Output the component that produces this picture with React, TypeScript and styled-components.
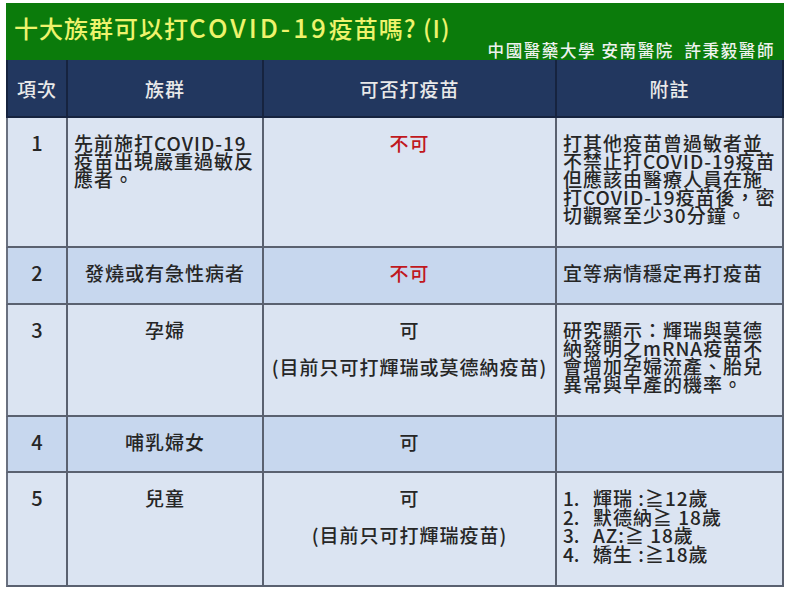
import React from 'react';
import styled, { createGlobalStyle, css } from 'styled-components';

const GlobalStyle = createGlobalStyle`
  html, body { margin: 0; padding: 0; background: #ffffff; }
  body { font-family: "Noto Sans CJK TC", "Noto Sans", sans-serif; }
`;

const Page = styled.div`
  width: 792px;
  height: 595px;
  box-sizing: border-box;
  padding: 3px 8px 0 6px;
  background: #ffffff;
`;

const Sheet = styled.div`
  width: 778px;
`;

const TitleBar = styled.header`
  height: 57px;
  box-sizing: border-box;
  background: #0b7b0b;
  padding: 10px 9px 0 8px;
  display: flex;
  flex-direction: column;
`;

const Title = styled.h1`
  margin: 0;
  font-size: 24px;
  line-height: 28px;
  font-weight: 500;
  letter-spacing: 1px;
  color: #eef36c;
  white-space: nowrap;
`;

const Latin = styled.span`
  font-size: 26px;
  letter-spacing: 3px;
`;

const Credit = styled.div`
  align-self: flex-end;
  margin-top: -1px;
  font-size: 16.5px;
  line-height: 18px;
  font-weight: 500;
  letter-spacing: 1.6px;
  color: #eef2ee;
  white-space: pre;
`;

const Table = styled.div`
  display: grid;
  grid-template-columns: 62px 196px 293px 227px;
  grid-template-rows: 58px 130px 57px 112px 56px 114px;
`;

type Tone = 'light' | 'dark';
type Align = 'left' | 'center';

const HeadCell = styled.div<{ $first?: boolean }>`
  box-sizing: border-box;
  background: #22375f;
  border-right: 2px solid #16233f;
  border-bottom: 2px solid #16233f;
  ${(p) => p.$first && css`border-left: 2px solid #16233f;`}
  color: #e9e9e9;
  font-size: 19px;
  font-weight: 500;
  letter-spacing: 1px;
  display: flex;
  align-items: center;
  justify-content: center;
`;

const Cell = styled.div<{ $tone: Tone; $align: Align; $first?: boolean }>`
  box-sizing: border-box;
  background: ${(p) => (p.$tone === 'light' ? '#dbe4f2' : '#c7d7ee')};
  border-right: 2px solid #5a6170;
  border-bottom: 2px solid #5a6170;
  ${(p) => p.$first && css`border-left: 2px solid #6a7180;`}
  padding: 16px 6px 0 6px;
  font-size: 19px;
  font-weight: 500;
  line-height: 18px;
  letter-spacing: 1px;
  color: #262626;
  text-align: ${(p) => p.$align};
`;

const Num = styled.span`
  font-size: 20px;
  letter-spacing: 0;
`;

const Line = styled.span`
  display: block;
  white-space: nowrap;
`;

const Verdict = styled.span<{ $no?: boolean }>`
  display: block;
  white-space: nowrap;
  color: ${(p) => (p.$no ? '#c0181d' : '#262626')};
`;

const Note = styled.span`
  display: block;
  margin-top: 19px;
  white-space: nowrap;
`;

const AgeList = styled.div`
  display: grid;
  grid-template-columns: 30px auto;
  line-height: 18.5px;
`;

const AgeNum = styled.span`
  letter-spacing: 0;
`;

const AgeText = styled.span`
  white-space: pre;
`;

type Row = {
  num: string;
  group: string[];
  groupAlign: Align;
  verdict: string;
  no?: boolean;
  note?: string;
  remarks?: string[];
  ages?: [string, string][];
};

const rows: Row[] = [
  {
    num: '1',
    group: ['先前施打COVID-19', '疫苗出現嚴重過敏反', '應者。'],
    groupAlign: 'left',
    verdict: '不可',
    no: true,
    remarks: [
      '打其他疫苗曾過敏者並',
      '不禁止打COVID-19疫苗',
      '但應該由醫療人員在施',
      '打COVID-19疫苗後，密',
      '切觀察至少30分鐘。',
    ],
  },
  {
    num: '2',
    group: ['發燒或有急性病者'],
    groupAlign: 'center',
    verdict: '不可',
    no: true,
    remarks: ['宜等病情穩定再打疫苗'],
  },
  {
    num: '3',
    group: ['孕婦'],
    groupAlign: 'center',
    verdict: '可',
    note: '(目前只可打輝瑞或莫德納疫苗)',
    remarks: ['研究顯示：輝瑞與莫德', '納發明之mRNA疫苗不', '會增加孕婦流產、胎兒', '異常與早產的機率。'],
  },
  {
    num: '4',
    group: ['哺乳婦女'],
    groupAlign: 'center',
    verdict: '可',
    remarks: [],
  },
  {
    num: '5',
    group: ['兒童'],
    groupAlign: 'center',
    verdict: '可',
    note: '(目前只可打輝瑞疫苗)',
    ages: [
      ['1.', '輝瑞 :≧12歲'],
      ['2.', '默德納≧ 18歲'],
      ['3.', 'AZ:≧ 18歲'],
      ['4.', '嬌生 :≧18歲'],
    ],
  },
];

export default function App() {
  return (
    <>
      <GlobalStyle />
      <Page>
        <Sheet>
          <TitleBar>
            <Title>
              十大族群可以打<Latin>COVID-19</Latin>疫苗嗎? (I)
            </Title>
            <Credit>{'中國醫藥大學 安南醫院  許秉毅醫師'}</Credit>
          </TitleBar>
          <Table>
            <HeadCell $first>項次</HeadCell>
            <HeadCell>族群</HeadCell>
            <HeadCell>可否打疫苗</HeadCell>
            <HeadCell>附註</HeadCell>
            {rows.map((r, i) => {
              const tone: Tone = i % 2 === 0 ? 'light' : 'dark';
              return (
                <React.Fragment key={r.num}>
                  <Cell $tone={tone} $align="center" $first>
                    <Num>{r.num}</Num>
                  </Cell>
                  <Cell $tone={tone} $align={r.groupAlign}>
                    {r.group.map((g) => (
                      <Line key={g}>{g}</Line>
                    ))}
                  </Cell>
                  <Cell $tone={tone} $align="center">
                    <Verdict $no={r.no}>{r.verdict}</Verdict>
                    {r.note && <Note>{r.note}</Note>}
                  </Cell>
                  <Cell $tone={tone} $align="left">
                    {r.remarks?.map((m) => (
                      <Line key={m}>{m}</Line>
                    ))}
                    {r.ages && (
                      <AgeList>
                        {r.ages.map(([n, t]) => (
                          <React.Fragment key={n}>
                            <AgeNum>{n}</AgeNum>
                            <AgeText>{t}</AgeText>
                          </React.Fragment>
                        ))}
                      </AgeList>
                    )}
                  </Cell>
                </React.Fragment>
              );
            })}
          </Table>
        </Sheet>
      </Page>
    </>
  );
}
